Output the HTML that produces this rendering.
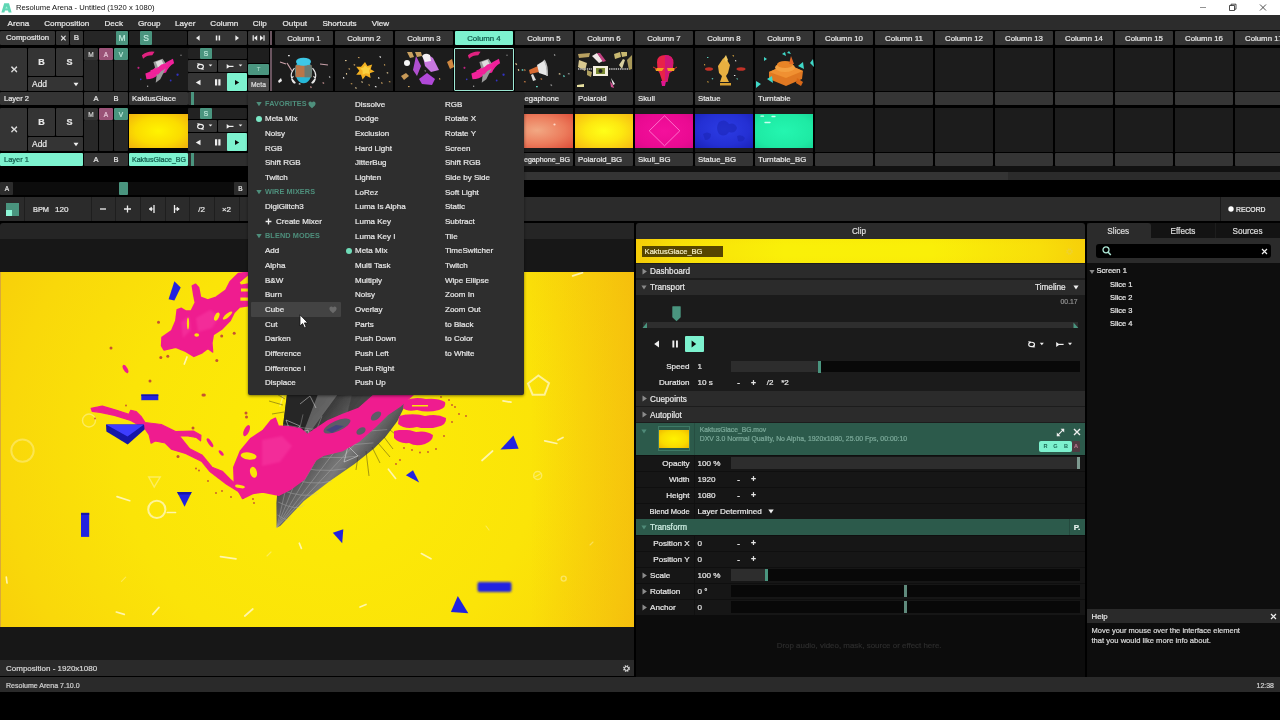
<!DOCTYPE html>
<html><head><meta charset="utf-8"><title>Resolume Arena</title>
<style>
html,body{margin:0;padding:0;background:#000;}
body{width:1280px;height:720px;position:relative;overflow:hidden;font-family:"Liberation Sans",sans-serif;font-size:8px;color:#e6e6e6;}
div,span,svg{position:absolute;box-sizing:border-box;}
span{white-space:pre;-webkit-text-stroke:0.22px currentColor;}
#w{left:0;top:0;width:1280px;height:720px;will-change:transform;}
</style></head><body><div id="w">
<div style="left:0px;top:0px;width:1280px;height:15px;background:#ffffff;"></div>
<svg style="left:1.4px;top:2.5px;" width="11" height="10" viewBox="0 0 11 10"><path d="M3.2 0.3 L8 0.3 L10.6 9.6 L7.6 9.6 L7 7.4 L4 7.4 L3.4 9.6 L0.4 9.6 Z" fill="#5fd6b4"/><path d="M4.3 5.6 L6.7 5.6 L5.5 3.2 Z" fill="#a8f0dc"/></svg>
<span style="left:16px;top:3px;font-size:7.65px;line-height:9.56px;color:#111;-webkit-text-stroke:0;">Resolume Arena - Untitled (1920 x 1080)</span>
<svg style="left:1196px;top:0px;" width="84" height="15" viewBox="0 0 84 15"><path d="M4 7.5h6" stroke="#777" stroke-width="0.8"/><path d="M33.5 5.5h5v5h-5z M35 5.5v-1.3h5v5h-1.5" fill="none" stroke="#222" stroke-width="0.8"/><path d="M64 4.5l6 6M70 4.5l-6 6" stroke="#222" stroke-width="0.8"/></svg>
<div style="left:0px;top:15px;width:1280px;height:15px;background:#2c2c2c;"></div>
<span style="left:7.59px;top:19px;font-size:8.1px;line-height:10.12px;color:#e8e8e8;">Arena</span>
<span style="left:44.24px;top:19px;font-size:8.1px;line-height:10.12px;color:#e8e8e8;">Composition</span>
<span style="left:104.52px;top:19px;font-size:8.1px;line-height:10.12px;color:#e8e8e8;">Deck</span>
<span style="left:137.99px;top:19px;font-size:8.1px;line-height:10.12px;color:#e8e8e8;">Group</span>
<span style="left:175.12px;top:19px;font-size:8.1px;line-height:10.12px;color:#e8e8e8;">Layer</span>
<span style="left:210.3px;top:19px;font-size:8.1px;line-height:10.12px;color:#e8e8e8;">Column</span>
<span style="left:252.77px;top:19px;font-size:8.1px;line-height:10.12px;color:#e8e8e8;">Clip</span>
<span style="left:282.59px;top:19px;font-size:8.1px;line-height:10.12px;color:#e8e8e8;">Output</span>
<span style="left:322.39px;top:19px;font-size:8.1px;line-height:10.12px;color:#e8e8e8;">Shortcuts</span>
<span style="left:371.8px;top:19px;font-size:8.1px;line-height:10.12px;color:#e8e8e8;">View</span>
<div style="left:0px;top:31px;width:55px;height:14px;background:#343434;border-radius:1px;"></div>
<span style="left:6px;top:33px;font-size:7.75px;line-height:9.69px;color:#e6e6e6;">Composition</span>
<div style="left:56px;top:31px;width:13px;height:14px;background:#343434;border-radius:1px;"></div>
<span style="left:59.69px;top:34px;font-size:7.5px;line-height:9.38px;color:#e6e6e6;">✕</span>
<div style="left:70px;top:31px;width:13px;height:14px;background:#343434;border-radius:1px;"></div>
<span style="left:73.83px;top:33px;font-size:8.0px;line-height:10.0px;color:#e6e6e6;">B</span>
<div style="left:84px;top:31px;width:44px;height:14px;background:#262626;border-radius:1px;"></div>
<div style="left:116px;top:31px;width:12px;height:14px;background:#4a957f;border-radius:1px;"></div>
<span style="left:118.46px;top:33px;font-size:8.5px;line-height:10.62px;color:#bfe9dc;">M</span>
<div style="left:129px;top:31px;width:58px;height:14px;background:#212121;border-radius:1px;"></div>
<div style="left:140px;top:31px;width:12px;height:14px;background:#4a957f;border-radius:1px;"></div>
<span style="left:143.17px;top:33px;font-size:8.5px;line-height:10.62px;color:#bfe9dc;">S</span>
<div style="left:188px;top:31px;width:59px;height:14px;background:#343434;border-radius:1px;"></div>
<svg style="left:188px;top:33px;" width="60" height="10" viewBox="0 0 60 10"><path d="M8 5 l3.6 -2.7 v5.4z" fill="#eee"/><path d="M27.8 2.4h1.5v5.2h-1.5z M30.6 2.4h1.5v5.2h-1.5z" fill="#eee"/><path d="M51 5 l-3.6 -2.7 v5.4z" fill="#eee"/></svg>
<div style="left:248px;top:31px;width:21px;height:14px;background:#343434;border-radius:1px;"></div>
<svg style="left:248px;top:33px;" width="21" height="10" viewBox="0 0 21 10"><path d="M4.6 2.2h1.2v5.6h-1.2z M9.2 2.2v5.6l-3.2 -2.8z M16.6 2.2h-1.2v5.6h1.2z M12 2.2v5.6l3.2 -2.8z" fill="#eee"/></svg>
<div style="left:270.4px;top:31px;width:1.7px;height:14px;background:#6b5560;"></div>
<div style="left:270.4px;top:48px;width:1.7px;height:43px;background:#6b5560;"></div>
<div style="left:274.67px;top:31px;width:58.67px;height:14px;background:#343434;border-radius:1px;"></div>
<span style="left:287.17px;top:34px;font-size:7.85px;line-height:9.81px;color:#e6e6e6;">Column 1</span>
<div style="left:334.67px;top:31px;width:58.67px;height:14px;background:#343434;border-radius:1px;"></div>
<span style="left:347.17px;top:34px;font-size:7.85px;line-height:9.81px;color:#e6e6e6;">Column 2</span>
<div style="left:394.67px;top:31px;width:58.67px;height:14px;background:#343434;border-radius:1px;"></div>
<span style="left:407.17px;top:34px;font-size:7.85px;line-height:9.81px;color:#e6e6e6;">Column 3</span>
<div style="left:454.67px;top:31px;width:58.67px;height:14px;background:#7df2cf;border-radius:1px;"></div>
<span style="left:467.17px;top:34px;font-size:7.85px;line-height:9.81px;color:#10584a;">Column 4</span>
<div style="left:514.67px;top:31px;width:58.67px;height:14px;background:#343434;border-radius:1px;"></div>
<span style="left:527.17px;top:34px;font-size:7.85px;line-height:9.81px;color:#e6e6e6;">Column 5</span>
<div style="left:574.67px;top:31px;width:58.67px;height:14px;background:#343434;border-radius:1px;"></div>
<span style="left:587.17px;top:34px;font-size:7.85px;line-height:9.81px;color:#e6e6e6;">Column 6</span>
<div style="left:634.67px;top:31px;width:58.67px;height:14px;background:#343434;border-radius:1px;"></div>
<span style="left:647.17px;top:34px;font-size:7.85px;line-height:9.81px;color:#e6e6e6;">Column 7</span>
<div style="left:694.67px;top:31px;width:58.67px;height:14px;background:#343434;border-radius:1px;"></div>
<span style="left:707.17px;top:34px;font-size:7.85px;line-height:9.81px;color:#e6e6e6;">Column 8</span>
<div style="left:754.67px;top:31px;width:58.67px;height:14px;background:#343434;border-radius:1px;"></div>
<span style="left:767.17px;top:34px;font-size:7.85px;line-height:9.81px;color:#e6e6e6;">Column 9</span>
<div style="left:814.67px;top:31px;width:58.67px;height:14px;background:#343434;border-radius:1px;"></div>
<span style="left:824.99px;top:34px;font-size:7.85px;line-height:9.81px;color:#e6e6e6;">Column 10</span>
<div style="left:874.67px;top:31px;width:58.67px;height:14px;background:#343434;border-radius:1px;"></div>
<span style="left:884.92px;top:34px;font-size:8.0px;line-height:10.0px;color:#e6e6e6;">Column 11</span>
<div style="left:934.67px;top:31px;width:58.67px;height:14px;background:#343434;border-radius:1px;"></div>
<span style="left:944.99px;top:34px;font-size:7.85px;line-height:9.81px;color:#e6e6e6;">Column 12</span>
<div style="left:994.67px;top:31px;width:58.67px;height:14px;background:#343434;border-radius:1px;"></div>
<span style="left:1004.99px;top:34px;font-size:7.85px;line-height:9.81px;color:#e6e6e6;">Column 13</span>
<div style="left:1054.67px;top:31px;width:58.67px;height:14px;background:#343434;border-radius:1px;"></div>
<span style="left:1064.99px;top:34px;font-size:7.85px;line-height:9.81px;color:#e6e6e6;">Column 14</span>
<div style="left:1114.67px;top:31px;width:58.67px;height:14px;background:#343434;border-radius:1px;"></div>
<span style="left:1124.99px;top:34px;font-size:7.85px;line-height:9.81px;color:#e6e6e6;">Column 15</span>
<div style="left:1174.67px;top:31px;width:58.67px;height:14px;background:#343434;border-radius:1px;"></div>
<span style="left:1184.99px;top:34px;font-size:7.85px;line-height:9.81px;color:#e6e6e6;">Column 16</span>
<div style="left:1234.67px;top:31px;width:58.67px;height:14px;background:#343434;border-radius:1px;"></div>
<span style="left:1244.99px;top:34px;font-size:7.85px;line-height:9.81px;color:#e6e6e6;">Column 17</span>
<div style="left:0px;top:48px;width:27px;height:43px;background:#343434;border-radius:1px;"></div>
<span style="left:9.94px;top:64px;font-size:9.5px;line-height:11.88px;color:#e6e6e6;">✕</span>
<div style="left:28px;top:48px;width:27px;height:28px;background:#343434;border-radius:1px;"></div>
<span style="left:38.25px;top:57px;font-size:9.0px;line-height:11.25px;color:#e6e6e6;font-weight:bold;">B</span>
<div style="left:56px;top:48px;width:27px;height:28px;background:#343434;border-radius:1px;"></div>
<span style="left:66.5px;top:57px;font-size:9.0px;line-height:11.25px;color:#e6e6e6;font-weight:bold;">S</span>
<div style="left:28px;top:77px;width:55px;height:14px;background:#343434;border-radius:1px;"></div>
<span style="left:32px;top:79px;font-size:8.45px;line-height:10.56px;color:#e6e6e6;">Add</span>
<svg style="left:73px;top:82px;" width="6" height="5" viewBox="0 0 6 5"><path d="M0.5 0.8h5l-2.5 3.4z" fill="#eee"/></svg>
<div style="left:84px;top:48px;width:14px;height:12px;background:#343434;border-radius:1px;"></div>
<span style="left:88.29px;top:51px;font-size:6.5px;line-height:8.12px;color:#cfcfcf;">M</span>
<div style="left:99px;top:48px;width:14px;height:12px;background:#9a5277;border-radius:1px;"></div>
<span style="left:103.83px;top:51px;font-size:6.5px;line-height:8.12px;color:#e6c3d6;">A</span>
<div style="left:114px;top:48px;width:14px;height:12px;background:#4a957f;border-radius:1px;"></div>
<span style="left:118.83px;top:51px;font-size:6.5px;line-height:8.12px;color:#bfe9dc;">V</span>
<div style="left:84px;top:60px;width:14px;height:31px;background:#282828;border-radius:1px;"></div>
<div style="left:99px;top:60px;width:14px;height:31px;background:#282828;border-radius:1px;"></div>
<div style="left:114px;top:60px;width:14px;height:31px;background:#282828;border-radius:1px;"></div>
<div style="left:129px;top:48px;width:59px;height:43px;background:#1b1b1b;"></div>
<div style="left:188px;top:48px;width:59px;height:11px;background:#222222;border-radius:1px;"></div>
<div style="left:200px;top:48px;width:12px;height:11px;background:#4a957f;border-radius:1px;"></div>
<span style="left:203.83px;top:50px;font-size:6.5px;line-height:8.12px;color:#bfe9dc;">S</span>
<div style="left:188px;top:60px;width:29px;height:12px;background:#343434;border-radius:1px;"></div>
<div style="left:218px;top:60px;width:29px;height:12px;background:#343434;border-radius:1px;"></div>
<svg style="left:188px;top:60px;" width="60" height="12" viewBox="0 0 60 12"><ellipse cx="12.5" cy="6.5" rx="2.9" ry="2.2" fill="none" stroke="#eee" stroke-width="1.15"/><path d="M8.800 3.600l2.900 -0.300 -0.900 2.500z M16.200 9.400l-2.900 0.300 0.900 -2.500z" fill="#eee"/><path d="M20.7 4.5h3.6l-1.8 2.1z" fill="#eee"/><path d="M38.7 4l3.2 2.4 -3.2 2.4z" fill="#eee"/><path d="M41 6.4h4.5" stroke="#eee" stroke-width="1.2"/><path d="M50.7 4.5h3.6l-1.8 2.100z" fill="#eee"/></svg>
<div style="left:188px;top:73px;width:59px;height:18px;background:#343434;border-radius:1px;"></div>
<div style="left:227px;top:73px;width:20px;height:18px;background:#7df2cf;border-radius:1px;"></div>
<svg style="left:188px;top:77px;" width="60" height="10" viewBox="0 0 60 10"><path d="M7.75 5.5 l4.75 -2.75 v5.5z" fill="#eee"/><path d="M27 2.300h2.200v6.200h-2.200z M30.300 2.300h2.200v6.200h-2.200z" fill="#eee"/><path d="M51.200 5.500 l-4.200 -2.600 v5.200z" fill="#0b0b0b"/></svg>
<div style="left:248px;top:48px;width:21px;height:15px;background:#1e1e1e;"></div>
<div style="left:248px;top:63.5px;width:21px;height:11.8px;background:#4a957f;border-radius:1px;"></div>
<span style="left:256.67px;top:66px;font-size:6.0px;line-height:7.5px;color:#b5e0d2;-webkit-text-stroke:0;">T</span>
<div style="left:248px;top:78px;width:21px;height:13px;background:#4a4a4a;border-radius:1px;"></div>
<span style="left:251.05px;top:81px;font-size:6.7px;line-height:8.38px;color:#ddd;">Meta</span>
<div style="left:0px;top:92px;width:83px;height:13px;background:#343434;border-radius:1px;"></div>
<span style="left:4px;top:94px;font-size:7.5px;line-height:9.38px;color:#e6e6e6;">Layer 2</span>
<div style="left:84px;top:92px;width:44px;height:13px;background:#343434;border-radius:1px;"></div>
<span style="left:93.5px;top:94px;font-size:7.5px;line-height:9.38px;color:#e6e6e6;">A</span>
<span style="left:113.5px;top:94px;font-size:7.5px;line-height:9.38px;color:#e6e6e6;">B</span>
<div style="left:129px;top:92px;width:59px;height:13px;background:#343434;border-radius:1px;"></div>
<span style="left:132px;top:94px;font-size:7.75px;line-height:9.69px;color:#e6e6e6;">KaktusGlace</span>
<div style="left:188px;top:92px;width:82px;height:13px;background:#2e2e2e;border-radius:1px;"></div>
<div style="left:191px;top:92px;width:3px;height:13px;background:#4a957f;"></div>
<div style="left:0px;top:108px;width:27px;height:43px;background:#343434;border-radius:1px;"></div>
<span style="left:9.94px;top:124px;font-size:9.5px;line-height:11.88px;color:#e6e6e6;">✕</span>
<div style="left:28px;top:108px;width:27px;height:28px;background:#343434;border-radius:1px;"></div>
<span style="left:38.25px;top:117px;font-size:9.0px;line-height:11.25px;color:#e6e6e6;font-weight:bold;">B</span>
<div style="left:56px;top:108px;width:27px;height:28px;background:#343434;border-radius:1px;"></div>
<span style="left:66.5px;top:117px;font-size:9.0px;line-height:11.25px;color:#e6e6e6;font-weight:bold;">S</span>
<div style="left:28px;top:137px;width:55px;height:14px;background:#343434;border-radius:1px;"></div>
<span style="left:32px;top:139px;font-size:8.45px;line-height:10.56px;color:#e6e6e6;">Add</span>
<svg style="left:73px;top:142px;" width="6" height="5" viewBox="0 0 6 5"><path d="M0.5 0.8h5l-2.5 3.4z" fill="#eee"/></svg>
<div style="left:84px;top:108px;width:14px;height:12px;background:#343434;border-radius:1px;"></div>
<span style="left:88.29px;top:111px;font-size:6.5px;line-height:8.12px;color:#cfcfcf;">M</span>
<div style="left:99px;top:108px;width:14px;height:12px;background:#9a5277;border-radius:1px;"></div>
<span style="left:103.83px;top:111px;font-size:6.5px;line-height:8.12px;color:#e6c3d6;">A</span>
<div style="left:114px;top:108px;width:14px;height:12px;background:#4a957f;border-radius:1px;"></div>
<span style="left:118.83px;top:111px;font-size:6.5px;line-height:8.12px;color:#bfe9dc;">V</span>
<div style="left:84px;top:120px;width:14px;height:31px;background:#282828;border-radius:1px;"></div>
<div style="left:99px;top:120px;width:14px;height:31px;background:#282828;border-radius:1px;"></div>
<div style="left:114px;top:120px;width:14px;height:31px;background:#282828;border-radius:1px;"></div>
<div style="left:129px;top:108px;width:59px;height:43px;background:#1b1b1b;"></div>
<div style="left:188px;top:108px;width:59px;height:11px;background:#222222;border-radius:1px;"></div>
<div style="left:200px;top:108px;width:12px;height:11px;background:#4a957f;border-radius:1px;"></div>
<span style="left:203.83px;top:110px;font-size:6.5px;line-height:8.12px;color:#bfe9dc;">S</span>
<div style="left:188px;top:120px;width:29px;height:12px;background:#343434;border-radius:1px;"></div>
<div style="left:218px;top:120px;width:29px;height:12px;background:#343434;border-radius:1px;"></div>
<svg style="left:188px;top:120px;" width="60" height="12" viewBox="0 0 60 12"><ellipse cx="12.5" cy="6.5" rx="2.9" ry="2.2" fill="none" stroke="#eee" stroke-width="1.15"/><path d="M8.800 3.600l2.900 -0.300 -0.900 2.500z M16.200 9.400l-2.900 0.300 0.900 -2.500z" fill="#eee"/><path d="M20.7 4.5h3.6l-1.8 2.1z" fill="#eee"/><path d="M38.7 4l3.2 2.4 -3.2 2.4z" fill="#eee"/><path d="M41 6.4h4.5" stroke="#eee" stroke-width="1.2"/><path d="M50.7 4.5h3.6l-1.8 2.100z" fill="#eee"/></svg>
<div style="left:188px;top:133px;width:59px;height:18px;background:#343434;border-radius:1px;"></div>
<div style="left:227px;top:133px;width:20px;height:18px;background:#7df2cf;border-radius:1px;"></div>
<svg style="left:188px;top:137px;" width="60" height="10" viewBox="0 0 60 10"><path d="M7.75 5.5 l4.75 -2.75 v5.5z" fill="#eee"/><path d="M27 2.300h2.200v6.200h-2.200z M30.300 2.300h2.200v6.200h-2.200z" fill="#eee"/><path d="M51.200 5.500 l-4.200 -2.600 v5.200z" fill="#0b0b0b"/></svg>
<div style="left:248px;top:108px;width:21px;height:15px;background:#1e1e1e;"></div>
<div style="left:248px;top:123.5px;width:21px;height:11.8px;background:#4a957f;border-radius:1px;"></div>
<span style="left:256.67px;top:126px;font-size:6.0px;line-height:7.5px;color:#b5e0d2;-webkit-text-stroke:0;">T</span>
<div style="left:248px;top:138px;width:21px;height:13px;background:#4a4a4a;border-radius:1px;"></div>
<span style="left:251.05px;top:141px;font-size:6.7px;line-height:8.38px;color:#ddd;">Meta</span>
<div style="left:0px;top:153px;width:83px;height:13px;background:#7df2cf;border-radius:1px;"></div>
<span style="left:4px;top:155px;font-size:7.5px;line-height:9.38px;color:#115a4b;">Layer 1</span>
<div style="left:84px;top:153px;width:44px;height:13px;background:#343434;border-radius:1px;"></div>
<span style="left:93.5px;top:155px;font-size:7.5px;line-height:9.38px;color:#e6e6e6;">A</span>
<span style="left:113.5px;top:155px;font-size:7.5px;line-height:9.38px;color:#e6e6e6;">B</span>
<div style="left:129px;top:153px;width:59px;height:13px;background:#7df2cf;border-radius:1px;"></div>
<span style="left:132px;top:156px;font-size:7.05px;line-height:8.81px;color:#115a4b;">KaktusGlace_BG</span>
<div style="left:188px;top:153px;width:82px;height:13px;background:#2e2e2e;border-radius:1px;"></div>
<div style="left:191px;top:153px;width:3px;height:13px;background:#4a957f;"></div>
<div style="left:270.4px;top:108px;width:1.7px;height:44px;background:#6b5560;"></div>
<div style="left:272px;top:48px;width:61.34px;height:43px;background:#1c1c1c;"></div>
<div style="left:274.67px;top:92px;width:58.67px;height:13px;background:#353535;border-radius:1px;"></div>
<div style="left:274.67px;top:108px;width:58.67px;height:44px;background:#1c1c1c;"></div>
<div style="left:274.67px;top:153px;width:58.67px;height:13px;background:#353535;border-radius:1px;"></div>
<span style="left:277.97px;top:94px;font-size:7.8px;line-height:9.75px;color:#e6e6e6;">Bandit</span>
<span style="left:277.97px;top:155px;font-size:7.8px;line-height:9.75px;color:#e6e6e6;">Bandit_BG</span>
<div style="left:334.67px;top:48px;width:58.67px;height:43px;background:#1c1c1c;"></div>
<div style="left:334.67px;top:92px;width:58.67px;height:13px;background:#353535;border-radius:1px;"></div>
<div style="left:334.67px;top:108px;width:58.67px;height:44px;background:#1c1c1c;"></div>
<div style="left:334.67px;top:153px;width:58.67px;height:13px;background:#353535;border-radius:1px;"></div>
<span style="left:337.97px;top:94px;font-size:7.8px;line-height:9.75px;color:#e6e6e6;">Confetti</span>
<span style="left:337.97px;top:155px;font-size:7.8px;line-height:9.75px;color:#e6e6e6;">Confetti_BG</span>
<div style="left:394.67px;top:48px;width:58.67px;height:43px;background:#1c1c1c;"></div>
<div style="left:394.67px;top:92px;width:58.67px;height:13px;background:#353535;border-radius:1px;"></div>
<div style="left:394.67px;top:108px;width:58.67px;height:44px;background:#1c1c1c;"></div>
<div style="left:394.67px;top:153px;width:58.67px;height:13px;background:#353535;border-radius:1px;"></div>
<span style="left:397.97px;top:94px;font-size:7.8px;line-height:9.75px;color:#e6e6e6;">Crystal</span>
<span style="left:397.97px;top:155px;font-size:7.8px;line-height:9.75px;color:#e6e6e6;">Crystal_BG</span>
<div style="left:454.67px;top:48px;width:58.67px;height:43px;background:#1c1c1c;"></div>
<div style="left:454.67px;top:92px;width:58.67px;height:13px;background:#353535;border-radius:1px;"></div>
<div style="left:454.67px;top:108px;width:58.67px;height:44px;background:#1c1c1c;"></div>
<div style="left:454.67px;top:153px;width:58.67px;height:13px;background:#353535;border-radius:1px;"></div>
<span style="left:457.97px;top:94px;font-size:7.8px;line-height:9.75px;color:#e6e6e6;">KaktusGlace</span>
<span style="left:457.97px;top:155px;font-size:7.8px;line-height:9.75px;color:#e6e6e6;">KaktusGlace_BG</span>
<div style="left:514.67px;top:48px;width:58.67px;height:43px;background:#1c1c1c;"></div>
<div style="left:514.67px;top:92px;width:58.67px;height:13px;background:#353535;border-radius:1px;"></div>
<div style="left:514.67px;top:108px;width:58.67px;height:44px;background:#1c1c1c;"></div>
<div style="left:514.67px;top:153px;width:58.67px;height:13px;background:#353535;border-radius:1px;"></div>
<span style="left:517.97px;top:94px;font-size:7.8px;line-height:9.75px;color:#e6e6e6;">Megaphone</span>
<span style="left:517.97px;top:156px;font-size:7.15px;line-height:8.94px;color:#e6e6e6;">Megaphone_BG</span>
<div style="left:574.67px;top:48px;width:58.67px;height:43px;background:#1c1c1c;"></div>
<div style="left:574.67px;top:92px;width:58.67px;height:13px;background:#353535;border-radius:1px;"></div>
<div style="left:574.67px;top:108px;width:58.67px;height:44px;background:#1c1c1c;"></div>
<div style="left:574.67px;top:153px;width:58.67px;height:13px;background:#353535;border-radius:1px;"></div>
<span style="left:577.97px;top:94px;font-size:7.8px;line-height:9.75px;color:#e6e6e6;">Polaroid</span>
<span style="left:577.97px;top:155px;font-size:7.8px;line-height:9.75px;color:#e6e6e6;">Polaroid_BG</span>
<div style="left:634.67px;top:48px;width:58.67px;height:43px;background:#1c1c1c;"></div>
<div style="left:634.67px;top:92px;width:58.67px;height:13px;background:#353535;border-radius:1px;"></div>
<div style="left:634.67px;top:108px;width:58.67px;height:44px;background:#1c1c1c;"></div>
<div style="left:634.67px;top:153px;width:58.67px;height:13px;background:#353535;border-radius:1px;"></div>
<span style="left:637.97px;top:94px;font-size:7.8px;line-height:9.75px;color:#e6e6e6;">Skull</span>
<span style="left:637.97px;top:155px;font-size:7.8px;line-height:9.75px;color:#e6e6e6;">Skull_BG</span>
<div style="left:694.67px;top:48px;width:58.67px;height:43px;background:#1c1c1c;"></div>
<div style="left:694.67px;top:92px;width:58.67px;height:13px;background:#353535;border-radius:1px;"></div>
<div style="left:694.67px;top:108px;width:58.67px;height:44px;background:#1c1c1c;"></div>
<div style="left:694.67px;top:153px;width:58.67px;height:13px;background:#353535;border-radius:1px;"></div>
<span style="left:697.97px;top:94px;font-size:7.8px;line-height:9.75px;color:#e6e6e6;">Statue</span>
<span style="left:697.97px;top:155px;font-size:7.8px;line-height:9.75px;color:#e6e6e6;">Statue_BG</span>
<div style="left:754.67px;top:48px;width:58.67px;height:43px;background:#1c1c1c;"></div>
<div style="left:754.67px;top:92px;width:58.67px;height:13px;background:#353535;border-radius:1px;"></div>
<div style="left:754.67px;top:108px;width:58.67px;height:44px;background:#1c1c1c;"></div>
<div style="left:754.67px;top:153px;width:58.67px;height:13px;background:#353535;border-radius:1px;"></div>
<span style="left:757.97px;top:94px;font-size:7.8px;line-height:9.75px;color:#e6e6e6;">Turntable</span>
<span style="left:757.97px;top:155px;font-size:7.8px;line-height:9.75px;color:#e6e6e6;">Turntable_BG</span>
<div style="left:814.67px;top:48px;width:58.67px;height:43px;background:#1c1c1c;"></div>
<div style="left:814.67px;top:92px;width:58.67px;height:13px;background:#353535;border-radius:1px;"></div>
<div style="left:814.67px;top:108px;width:58.67px;height:44px;background:#1c1c1c;"></div>
<div style="left:814.67px;top:153px;width:58.67px;height:13px;background:#353535;border-radius:1px;"></div>
<div style="left:874.67px;top:48px;width:58.67px;height:43px;background:#1c1c1c;"></div>
<div style="left:874.67px;top:92px;width:58.67px;height:13px;background:#353535;border-radius:1px;"></div>
<div style="left:874.67px;top:108px;width:58.67px;height:44px;background:#1c1c1c;"></div>
<div style="left:874.67px;top:153px;width:58.67px;height:13px;background:#353535;border-radius:1px;"></div>
<div style="left:934.67px;top:48px;width:58.67px;height:43px;background:#1c1c1c;"></div>
<div style="left:934.67px;top:92px;width:58.67px;height:13px;background:#353535;border-radius:1px;"></div>
<div style="left:934.67px;top:108px;width:58.67px;height:44px;background:#1c1c1c;"></div>
<div style="left:934.67px;top:153px;width:58.67px;height:13px;background:#353535;border-radius:1px;"></div>
<div style="left:994.67px;top:48px;width:58.67px;height:43px;background:#1c1c1c;"></div>
<div style="left:994.67px;top:92px;width:58.67px;height:13px;background:#353535;border-radius:1px;"></div>
<div style="left:994.67px;top:108px;width:58.67px;height:44px;background:#1c1c1c;"></div>
<div style="left:994.67px;top:153px;width:58.67px;height:13px;background:#353535;border-radius:1px;"></div>
<div style="left:1054.67px;top:48px;width:58.67px;height:43px;background:#1c1c1c;"></div>
<div style="left:1054.67px;top:92px;width:58.67px;height:13px;background:#353535;border-radius:1px;"></div>
<div style="left:1054.67px;top:108px;width:58.67px;height:44px;background:#1c1c1c;"></div>
<div style="left:1054.67px;top:153px;width:58.67px;height:13px;background:#353535;border-radius:1px;"></div>
<div style="left:1114.67px;top:48px;width:58.67px;height:43px;background:#1c1c1c;"></div>
<div style="left:1114.67px;top:92px;width:58.67px;height:13px;background:#353535;border-radius:1px;"></div>
<div style="left:1114.67px;top:108px;width:58.67px;height:44px;background:#1c1c1c;"></div>
<div style="left:1114.67px;top:153px;width:58.67px;height:13px;background:#353535;border-radius:1px;"></div>
<div style="left:1174.67px;top:48px;width:58.67px;height:43px;background:#1c1c1c;"></div>
<div style="left:1174.67px;top:92px;width:58.67px;height:13px;background:#353535;border-radius:1px;"></div>
<div style="left:1174.67px;top:108px;width:58.67px;height:44px;background:#1c1c1c;"></div>
<div style="left:1174.67px;top:153px;width:58.67px;height:13px;background:#353535;border-radius:1px;"></div>
<div style="left:1234.67px;top:48px;width:58.67px;height:43px;background:#1c1c1c;"></div>
<div style="left:1234.67px;top:92px;width:58.67px;height:13px;background:#353535;border-radius:1px;"></div>
<div style="left:1234.67px;top:108px;width:58.67px;height:44px;background:#1c1c1c;"></div>
<div style="left:1234.67px;top:153px;width:58.67px;height:13px;background:#353535;border-radius:1px;"></div>
<div style="left:454.4px;top:47.8px;width:59.2px;height:43.4px;background:transparent;border-radius:1px;border:1.5px solid #9eead6;"></div>
<svg style="left:274.67px;top:48px;" width="59" height="43" viewBox="0 0 59 43"><defs><filter id="tb27448"><feGaussianBlur stdDeviation="0.6"/></filter></defs><g filter="url(#tb27448)"><g transform="translate(-1.5 -1.8)"><ellipse cx="30" cy="25" rx="8.5" ry="12" fill="#28b8d8"/><rect x="22" y="19" width="16" height="12" fill="#b9764a"/><rect x="31" y="19" width="7" height="12" fill="#6b7a72"/><ellipse cx="30" cy="15.5" rx="7.5" ry="4" fill="#3cc8e6"/><path d="M21 22q-7 8 1 15M39 22q7 8-1 15M20 30q-4 3 1 7M40 30q4 3-1 7" stroke="#e8e8e8" stroke-width="1.1" fill="none"/></g><path d="M5 14l6 2M45 16l8 1M12 15l5 8" stroke="#c9a0a8" stroke-width="1.2"/><path d="M3 33l3-3 1 3-3 2z" fill="#eee"/><rect x="13" y="7" width="1.8" height="1.26" fill="#ddd" transform="rotate(0 13 7)"/><rect x="48" y="34" width="1.8" height="1.26" fill="#b88" transform="rotate(37 48 34)"/><rect x="55" y="28" width="1.8" height="1.26" fill="#999" transform="rotate(74 55 28)"/><rect x="24" y="35" width="1.8" height="1.26" fill="#ddd" transform="rotate(21 24 35)"/><rect x="36" y="38" width="1.8" height="1.26" fill="#b88" transform="rotate(58 36 38)"/></g></svg>
<svg style="left:334.67px;top:48px;" width="59" height="43" viewBox="0 0 59 43"><defs><filter id="tb33448"><feGaussianBlur stdDeviation="0.6"/></filter></defs><g filter="url(#tb33448)"><g transform="translate(30 22) scale(0.8) translate(-30 -24)"><path d="M30 14l3 5 6-2-2 6 5 3-6 2 1 6-6-3-4 5-2-6-6 0 4-5-4-5 6 0z" fill="#f2b020"/><path d="M30 18l3 3 4 0-2 4 1 4-5-1-4 2 0-5-3-3 4-1z" fill="#f9d040"/></g><rect x="10" y="12" width="1.6" height="1.1199999999999999" fill="#d8c090" transform="rotate(0 10 12)"/><rect x="14" y="20" width="1.6" height="1.1199999999999999" fill="#caa060" transform="rotate(37 14 20)"/><rect x="9" y="29" width="1.6" height="1.1199999999999999" fill="#eee" transform="rotate(74 9 29)"/><rect x="16" y="35" width="1.6" height="1.1199999999999999" fill="#b89050" transform="rotate(21 16 35)"/><rect x="21" y="39" width="1.6" height="1.1199999999999999" fill="#d8c090" transform="rotate(58 21 39)"/><rect x="23" y="9" width="1.6" height="1.1199999999999999" fill="#caa060" transform="rotate(5 23 9)"/><rect x="45" y="8" width="1.6" height="1.1199999999999999" fill="#eee" transform="rotate(42 45 8)"/><rect x="50" y="16" width="1.6" height="1.1199999999999999" fill="#b89050" transform="rotate(79 50 16)"/><rect x="52" y="24" width="1.6" height="1.1199999999999999" fill="#d8c090" transform="rotate(26 52 24)"/><rect x="47" y="34" width="1.6" height="1.1199999999999999" fill="#caa060" transform="rotate(63 47 34)"/><rect x="40" y="38" width="1.6" height="1.1199999999999999" fill="#eee" transform="rotate(10 40 38)"/><rect x="34" y="36" width="1.6" height="1.1199999999999999" fill="#b89050" transform="rotate(47 34 36)"/><rect x="12" y="25" width="1.6" height="1.1199999999999999" fill="#d8c090" transform="rotate(84 12 25)"/><rect x="19" y="16" width="1.6" height="1.1199999999999999" fill="#caa060" transform="rotate(31 19 16)"/><rect x="44" y="29" width="1.6" height="1.1199999999999999" fill="#eee" transform="rotate(68 44 29)"/><rect x="54" y="33" width="1.6" height="1.1199999999999999" fill="#b89050" transform="rotate(15 54 33)"/><rect x="27" y="33" width="1.6" height="1.1199999999999999" fill="#d8c090" transform="rotate(52 27 33)"/></g></svg>
<svg style="left:394.67px;top:48px;" width="59" height="43" viewBox="0 0 59 43"><defs><filter id="tb39448"><feGaussianBlur stdDeviation="0.6"/></filter></defs><g filter="url(#tb39448)"><path d="M21 8l5 10-4 10-4-6z" fill="#b050d0"/><path d="M28 9q6-3 10 1l6 12-8 2-6-6z" fill="#c878e0"/><path d="M27 8q3-4 8-1l1 6-6 1z" fill="#f4f0f4"/><path d="M24 31l8-6 8 6-3 6-10-1z" fill="#b048d8"/><circle cx="12" cy="15" r="3" fill="#f6f6f6"/><path d="M12 4l5 0 2 5-4 1zM20 4l6 0 1 4-5 1z" fill="#c8a060"/><path d="M6 28l5-3 3 3-5 4z" fill="#c89a58"/><path d="M52 14l5-3 2 8-4 2z" fill="#d08840"/><rect x="13" y="38" width="1.6" height="1.1199999999999999" fill="#c8a060" transform="rotate(0 13 38)"/><rect x="30" y="22" width="1.6" height="1.1199999999999999" fill="#888" transform="rotate(37 30 22)"/><rect x="45" y="30" width="1.6" height="1.1199999999999999" fill="#c8a060" transform="rotate(74 45 30)"/></g></svg>
<svg style="left:454.67px;top:48px;" width="59" height="43" viewBox="0 0 59 43"><defs><filter id="tb45448"><feGaussianBlur stdDeviation="0.6"/></filter></defs><g filter="url(#tb45448)"><g transform="translate(29 21) scale(1.15) translate(-29 -21)"><path d="M15 9q5-4 11-3l-2 3q-5 0-8 3z" fill="#e0207f"/><path d="M18 25q6-2 9-6l6-1q4-4 9-6l1 4q-5 3-7 8l-7 2q-4 4-10 4z" fill="#f0209a"/><path d="M25 15l8-3 4 6-6 12-4 3 1-8z" fill="#9a9a9a"/><path d="M27 15l5-2 2 4-5 3z" fill="#ddd"/><path d="M22 22q6-1 10-5l8-2-3 5q-5 2-8 6z" fill="#f0209a"/><circle cx="12" cy="20" r="0.9" fill="#c02080"/><circle cx="46" cy="26" r="1" fill="#3030c0"/><circle cx="40" cy="31" r="0.8" fill="#3030c0"/><circle cx="14" cy="30" r="0.7" fill="#3a3ad0"/><circle cx="49" cy="9" r="0.6" fill="#888"/><circle cx="20" cy="36" r="0.6" fill="#aaa"/></g></g></svg>
<svg style="left:514.67px;top:48px;" width="59" height="43" viewBox="0 0 59 43"><defs><filter id="tb51448"><feGaussianBlur stdDeviation="0.6"/></filter></defs><g filter="url(#tb51448)"><path d="M14 22l9-4 1 6-9 2z" fill="#d86a30"/><path d="M22 17l8-5 3 16-9-3z" fill="#e8e8e8"/><path d="M29 12q4 6 3 16" stroke="#bbb" stroke-width="1.4" fill="none"/><path d="M18 26l3 6-3 1-2-6z" fill="#ddd"/><rect x="21" y="38" width="1.8" height="1.26" fill="#60d0c0" transform="rotate(0 21 38)"/><rect x="26" y="30" width="1.8" height="1.26" fill="#b07040" transform="rotate(37 26 30)"/><rect x="40" y="6" width="1.8" height="1.26" fill="#888" transform="rotate(74 40 6)"/><rect x="44" y="25" width="1.8" height="1.26" fill="#d8c090" transform="rotate(21 44 25)"/><rect x="49" y="27" width="1.8" height="1.26" fill="#60d0c0" transform="rotate(58 49 27)"/><rect x="9" y="33" width="1.8" height="1.26" fill="#b07040" transform="rotate(5 9 33)"/><rect x="36" y="36" width="1.8" height="1.26" fill="#888" transform="rotate(42 36 36)"/><rect x="4" y="21" width="1.8" height="1.26" fill="#d8c090" transform="rotate(79 4 21)"/><rect x="7" y="21" width="1.8" height="1.26" fill="#60d0c0" transform="rotate(26 7 21)"/><rect x="10" y="21" width="1.8" height="1.26" fill="#b07040" transform="rotate(63 10 21)"/><rect x="53" y="25" width="1.8" height="1.26" fill="#888" transform="rotate(10 53 25)"/><rect x="1" y="15" width="1.8" height="1.26" fill="#d8c090" transform="rotate(47 1 15)"/></g></svg>
<svg style="left:574.67px;top:48px;" width="59" height="43" viewBox="0 0 59 43"><defs><filter id="tb57448"><feGaussianBlur stdDeviation="0.6"/></filter></defs><g filter="url(#tb57448)"><rect x="18" y="18" width="15" height="10" fill="#f4f0e0"/><rect x="21" y="20" width="9" height="6" fill="#7a8a30"/><circle cx="25.500" cy="23" r="2" fill="#222"/><path d="M4 12l8 3-2 8-7-4z" fill="#d8c890"/><path d="M3 6l12-1-1 4-10 1z" fill="#b8a060"/><path d="M17 8l5-3 6 8-4 2z" fill="#f0e8e8"/><path d="M22 5l3 0 6 8-3 1z" fill="#c04080"/><path d="M39 6l6-2 1 5-6 2zM46 4l6 0 0 4-5 1z" fill="#c8b870"/><path d="M52 12l5-5 0 14-3 1z" fill="#a89858"/><path d="M44 17l4-6 2 1-3 9z" fill="#d8d0a0"/><path d="M3 21h14M34 21h20" stroke="#999" stroke-width="2" stroke-dasharray="1.4 0.8"/><path d="M36 30l4 6-2 1z" fill="#eee"/><path d="M35 33l3 4 1 3-3-1z" fill="#d05090"/><path d="M2 37l7-1 0 3-7 0z" fill="#e8e0a0"/><path d="M12 22l5 2-1 5-4-2z" fill="#b0a060"/></g></svg>
<svg style="left:634.67px;top:48px;" width="59" height="43" viewBox="0 0 59 43"><defs><filter id="tb63448"><feGaussianBlur stdDeviation="0.6"/></filter></defs><g filter="url(#tb63448)"><path d="M22 14q0-7 8.500-7q8 0 8 8l-1 8-3 2-2 9-5 0-3-9-2-3z" fill="#e8204a"/><path d="M30 7q8 0 8 8l-1 8-3 2-2 9-2 0z" fill="#d01878"/><path d="M20 20l9 0-2 3-6 0zM32 20l8 0-1 3-6 0z" fill="#f4a020"/><path d="M26 33l5 0-1 5-3 0z" fill="#e01890"/><path d="M18 19l4 2M42 19l-3 2" stroke="#d03030" stroke-width="1"/></g></svg>
<svg style="left:694.67px;top:48px;" width="59" height="43" viewBox="0 0 59 43"><defs><filter id="tb69448"><feGaussianBlur stdDeviation="0.6"/></filter></defs><g filter="url(#tb69448)"><path d="M27 12q2-4 5 0l3 5-2 8-2 3 3 6-9 0 2-6-3-3-1-7z" fill="#e8b040"/><path d="M29 10l2-3 2 5-2 2z" fill="#f0c860"/><ellipse cx="14" cy="21" rx="4" ry="1.800" fill="#c03028"/><ellipse cx="46" cy="21" rx="4.500" ry="1.800" fill="#c03028"/><path d="M25 35h11v2.500h-11z" fill="#d8a030"/><rect x="12" y="9" width="1.4" height="0.9799999999999999" fill="#60d0c0" transform="rotate(0 12 9)"/><rect x="38" y="7" width="1.4" height="0.9799999999999999" fill="#e8b040" transform="rotate(37 38 7)"/><rect x="41" y="12" width="1.4" height="0.9799999999999999" fill="#eee" transform="rotate(74 41 12)"/><rect x="17" y="30" width="1.4" height="0.9799999999999999" fill="#60d0c0" transform="rotate(21 17 30)"/><rect x="13" y="33" width="1.4" height="0.9799999999999999" fill="#e8b040" transform="rotate(58 13 33)"/><rect x="39" y="27" width="1.4" height="0.9799999999999999" fill="#eee" transform="rotate(5 39 27)"/><rect x="42" y="30" width="1.4" height="0.9799999999999999" fill="#60d0c0" transform="rotate(42 42 30)"/><rect x="10" y="16" width="1.4" height="0.9799999999999999" fill="#e8b040" transform="rotate(79 10 16)"/></g></svg>
<svg style="left:754.67px;top:48px;" width="59" height="43" viewBox="0 0 59 43"><defs><filter id="tb75448"><feGaussianBlur stdDeviation="0.6"/></filter></defs><g filter="url(#tb75448)"><path d="M14 24l18-8 16 7-1 8-16 7-17-7z" fill="#e07820"/><path d="M14 24l18-8 16 7-17 7z" fill="#f09030"/><ellipse cx="30" cy="19.500" rx="10" ry="4.500" fill="#f4a040"/><ellipse cx="30" cy="16.500" rx="8" ry="3.500" fill="#e88428"/><path d="M36 8l3 8-5 0z" fill="#e06828"/><path d="M42 30l6 4-2 4-5-3z" fill="#d86818"/><path d="M1 33l5 3-5 4zM12 31l5-3 1 7zM43 18l5-4 1 7zM55 15l3-4 1 8zM9 9l3 2-3 2zM27 6l3-2 1 4zM32 5l2-2 2 3z" fill="#40d8c8"/></g></svg>
<svg style="left:129px;top:48px;" width="59" height="43" viewBox="0 0 59 43"><defs><filter id="tb12948"><feGaussianBlur stdDeviation="0.6"/></filter></defs><g filter="url(#tb12948)"><g transform="translate(29 21) scale(1.15) translate(-29 -21)"><path d="M15 9q5-4 11-3l-2 3q-5 0-8 3z" fill="#e0207f"/><path d="M18 25q6-2 9-6l6-1q4-4 9-6l1 4q-5 3-7 8l-7 2q-4 4-10 4z" fill="#f0209a"/><path d="M25 15l8-3 4 6-6 12-4 3 1-8z" fill="#9a9a9a"/><path d="M27 15l5-2 2 4-5 3z" fill="#ddd"/><path d="M22 22q6-1 10-5l8-2-3 5q-5 2-8 6z" fill="#f0209a"/><circle cx="12" cy="20" r="0.9" fill="#c02080"/><circle cx="46" cy="26" r="1" fill="#3030c0"/><circle cx="40" cy="31" r="0.8" fill="#3030c0"/><circle cx="14" cy="30" r="0.7" fill="#3a3ad0"/><circle cx="49" cy="9" r="0.6" fill="#888"/><circle cx="20" cy="36" r="0.6" fill="#aaa"/></g></g></svg>
<div style="left:274.67px;top:114px;width:58.67px;height:33.6px;background:#000;background:radial-gradient(ellipse at 45% 50%,#7ad8f0 0%,#30a8d8 100%);"></div>
<div style="left:334.67px;top:114px;width:58.67px;height:33.6px;background:#000;background:radial-gradient(ellipse at 50% 50%,#c0b0f0 0%,#7050c8 100%);"></div>
<div style="left:394.67px;top:114px;width:58.67px;height:33.6px;background:#000;background:radial-gradient(ellipse at 50% 50%,#f0d0a0 0%,#d09050 100%);"></div>
<div style="left:454.67px;top:114px;width:58.67px;height:33.6px;background:#000;background:radial-gradient(ellipse at 50% 50%,#fff400 0%,#fbdc00 55%,#f0b010 100%);"></div>
<div style="left:514.67px;top:114px;width:58.67px;height:33.6px;background:#000;background:radial-gradient(ellipse at 38% 48%,#f2a883 0%,#ec7c5c 55%,#de4c38 100%);"><svg style="left:0;top:0" width="59" height="34" viewBox="0 0 59 34"><circle cx="39.500" cy="10.500" r="1.100" fill="#ffd8c8"/><circle cx="5" cy="22" r="0.800" fill="#ffc8b0"/></svg></div>
<div style="left:574.67px;top:114px;width:58.67px;height:33.6px;background:#000;background:radial-gradient(ellipse at 50% 50%,#ffff18 0%,#fde810 45%,#f6b814 100%);"></div>
<div style="left:634.67px;top:114px;width:58.67px;height:33.6px;background:#000;background:radial-gradient(ellipse at 50% 50%,#f4109c 0%,#ea0a92 70%,#d80a88 100%);"><svg style="left:0;top:0" width="59" height="34" viewBox="0 0 59 34"><path d="M29.500 1.800L44.800 16.800 29.500 31.800 14.200 16.800Z" fill="none" stroke="#ff7ad0" stroke-width="0.9"/></svg></div>
<div style="left:694.67px;top:114px;width:58.67px;height:33.6px;background:#000;background:radial-gradient(ellipse at 50% 45%,#2c3ce4 0%,#2430d4 60%,#1a22b8 100%);"><svg style="left:0;top:0" width="59" height="34" viewBox="0 0 59 34"><g fill="#1a24b4" opacity="0.55"><path d="M24 8q6-4 10 2q6-2 8 4q-2 6-8 4q-4 6-10 2q-4-6 0-12z"/><path d="M8 20q4-3 8 0q0 6-6 6z"/><path d="M42 22q5-2 8 2q-2 5-7 3z"/></g></svg></div>
<div style="left:754.67px;top:114px;width:58.67px;height:33.6px;background:#000;background:radial-gradient(ellipse at 50% 50%,#24f6b0 0%,#1eeaa4 70%,#18d898 100%);"><svg style="left:0;top:0" width="59" height="34" viewBox="0 0 59 34"><path d="M10 8.500h5M17 2.500h3M6 2.200h2.500" stroke="#c8fff0" stroke-width="1.300" stroke-linecap="round"/></svg></div>
<div style="left:129px;top:108px;width:59px;height:45px;background:#040404;"></div>
<div style="left:129px;top:114px;width:59px;height:33.6px;background:#000;background:radial-gradient(ellipse at 50% 50%,#fff400 0%,#fbdc00 55%,#f0b010 100%);"></div>
<div style="left:248px;top:166px;width:1032px;height:6px;background:#111;"></div>
<div style="left:248px;top:172px;width:1032px;height:8px;background:#2b2b2b;"></div>
<div style="left:248px;top:172px;width:760px;height:8px;background:#343434;"></div>
<div style="left:0px;top:166px;width:247px;height:16px;background:#000;"></div>
<div style="left:0px;top:182px;width:247px;height:13px;background:#0c0c0c;"></div>
<div style="left:0px;top:182px;width:13px;height:13px;background:#2c2c2c;border-radius:1px;"></div>
<span style="left:4.63px;top:185px;font-size:6.5px;line-height:8.12px;color:#e6e6e6;">A</span>
<div style="left:234px;top:182px;width:13px;height:13px;background:#2c2c2c;border-radius:1px;"></div>
<span style="left:238.33px;top:185px;font-size:6.5px;line-height:8.12px;color:#e6e6e6;">B</span>
<div style="left:119px;top:182px;width:9px;height:13px;background:#4a957f;border-radius:1px;"></div>
<div style="left:0px;top:197px;width:1280px;height:24px;background:#2b2b2b;"></div>
<div style="left:6px;top:203px;width:13px;height:13px;background:#4a957f;"></div>
<div style="left:6px;top:210px;width:6px;height:6px;background:#8df5d6;"></div>
<div style="left:24px;top:197px;width:1px;height:24px;background:#1e1e1e;"></div>
<div style="left:91px;top:197px;width:1px;height:24px;background:#1e1e1e;"></div>
<div style="left:115px;top:197px;width:1px;height:24px;background:#1e1e1e;"></div>
<div style="left:140px;top:197px;width:1px;height:24px;background:#1e1e1e;"></div>
<div style="left:165px;top:197px;width:1px;height:24px;background:#1e1e1e;"></div>
<div style="left:189px;top:197px;width:1px;height:24px;background:#1e1e1e;"></div>
<div style="left:214px;top:197px;width:1px;height:24px;background:#1e1e1e;"></div>
<div style="left:239px;top:197px;width:1px;height:24px;background:#1e1e1e;"></div>
<span style="left:33px;top:205px;font-size:7.4px;line-height:9.25px;color:#e6e6e6;">BPM</span>
<span style="left:55px;top:205px;font-size:8.1px;line-height:10.12px;color:#e6e6e6;">120</span>
<svg style="left:97px;top:203px;" width="140" height="12" viewBox="0 0 140 12"><path d="M3 6h6" stroke="#eee" stroke-width="1.3"/><path d="M27 6h7M30.5 2.5v7" stroke="#eee" stroke-width="1.3"/><path d="M57 2v8" stroke="#eee" stroke-width="1.3"/><path d="M52.5 6h4M54.5 4.3l-2.3 1.7 2.3 1.7z" stroke="#eee" stroke-width="0.9" fill="#eee"/><path d="M77.5 2v8" stroke="#eee" stroke-width="1.3"/><path d="M78 6h4M80 4.3l2.3 1.7 -2.3 1.7z" stroke="#eee" stroke-width="0.9" fill="#eee"/></svg>
<span style="left:198.16px;top:205px;font-size:8.0px;line-height:10.0px;color:#e6e6e6;">/2</span>
<span style="left:221.94px;top:205px;font-size:8.0px;line-height:10.0px;color:#e6e6e6;">×2</span>
<div style="left:1220px;top:197px;width:1px;height:24px;background:#1a1a1a;"></div>
<svg style="left:1228px;top:206px;" width="6" height="6" viewBox="0 0 6 6"><circle cx="3" cy="3" r="2.7" fill="#fff"/></svg>
<span style="left:1236px;top:206px;font-size:6.8px;line-height:8.5px;color:#f0f0f0;">RECORD</span>
<div style="left:0px;top:223px;width:634px;height:16px;background:#252525;border-radius:3px 0 0 0;"></div>
<div style="left:0px;top:239px;width:634px;height:33px;background:#171717;"></div>
<div style="left:0px;top:627px;width:634px;height:33px;background:#171717;"></div>
<svg style="left:0;top:272px;" width="634" height="355" viewBox="0 272 634 355"><defs>
<radialGradient id="bg" cx="330" cy="455" r="460" gradientUnits="userSpaceOnUse">
<stop offset="0" stop-color="#fdec06"/><stop offset="0.45" stop-color="#fbe408"/><stop offset="0.7" stop-color="#f9d80a"/><stop offset="0.88" stop-color="#f7cb0a"/><stop offset="1" stop-color="#f5c00c"/>
</radialGradient>
<linearGradient id="cone" x1="285" y1="450" x2="345" y2="495" gradientUnits="userSpaceOnUse">
<stop offset="0" stop-color="#2c2c2c"/><stop offset="0.35" stop-color="#555"/><stop offset="0.7" stop-color="#7a7a7a"/><stop offset="1" stop-color="#4a4a4a"/>
</linearGradient>
<linearGradient id="rg" x1="530" y1="0" x2="634" y2="0" gradientUnits="userSpaceOnUse"><stop offset="0" stop-color="#f0a012" stop-opacity="0"/><stop offset="1" stop-color="#f0a012" stop-opacity="0.4"/></linearGradient>
<filter id="b1" x="-10%" y="-30%" width="120%" height="160%"><feGaussianBlur stdDeviation="0.9"/></filter>
<filter id="b0"><feGaussianBlur stdDeviation="0.35"/></filter>
</defs><rect x="0" y="272" width="634" height="355" fill="url(#bg)"/><rect x="530" y="272" width="104" height="355" fill="url(#rg)"/><g stroke="#fff8c8" fill="none" stroke-linecap="round" stroke-width="2" opacity="0.75"><circle cx="22.5" cy="450.6" r="11.2" opacity="0.5"/><circle cx="156.8" cy="509.4" r="8.6" opacity="1"/><path d="M538.4 375.5l10.6 7.6-4.4 11.6-12 0-4.6-11.2z"/></g><g stroke="#fff8c8" fill="none" stroke-linecap="round" stroke-width="1.4" opacity="0.45"><circle cx="89" cy="420.5" r="6.5"/><path d="M148.7 477h11.5l-6 10.1z"/><circle cx="537.7" cy="475.5" r="4"/><path d="M534 477.5l7-4"/><circle cx="563.7" cy="578.6" r="2.5"/><path d="M283 396l-3 10"/></g><g stroke="#fff8c8" fill="none" stroke-linecap="round" stroke-width="1.7" opacity="0.85"><path d="M117 496.6L129.8 500.7"/><path d="M167.3 512.5L175.5 512.5"/><path d="M220.5 556.6L236 558.8"/><path d="M152.8 614.4L159 607.4"/><path d="M116.3 612L124.3 614.4"/><path d="M244.8 616L252.8 609"/><path d="M6.3 577L7 583"/><path d="M299.3 543.2L301.4 548.4"/><path d="M388.4 469.2L395.6 478.4"/><path d="M482 460.5L492.6 451"/><path d="M544.7 440.8L556.8 443.5"/><path d="M503 400.8L511 402.2"/><path d="M421.4 553.6L431 558.8"/><path d="M572.7 275.9L582.5 272.8"/><path d="M184.3 364L187 357"/><path d="M558 440L563 437.5"/><path d="M360 607L366 604.5"/></g><g stroke="#fff8c8" fill="none" stroke-linecap="round" stroke-width="1.1" opacity="0.4"><path d="M121.5 581.4l4.2-4.2M486 526l3 4M267 556l4-4M590 545l3-3"/></g><g filter="url(#b0)"><path d="M287 394L282.6 429 276.4 503 276.6 527.8 280.5 525.7 303.9 501 329.2 481.5 354.5 464 374 448.4 385.6 436.7 397.3 421.2 405 405.6 409 394Z" fill="url(#cone)"/><path d="M287 394L282.6 429 278 484 300 440 318 394Z" fill="#262626" opacity="0.8"/><path d="M318 394l20 0-22 30-20 28z" fill="#8a8a8a" opacity="0.55"/><path d="M352 394l22 0-30 34z" fill="#3a3a3a" opacity="0.7"/><g stroke="#b9b9b9" stroke-width="0.7" fill="none" opacity="0.55"><path d="M277.4 514.9Q289.9 523.7 290.4 516.6"/><path d="M278.2 502.1Q297.2 511.5 304.2 505.0"/><path d="M279.1 489.2Q304.6 499.2 318.1 493.2"/><path d="M279.9 476.3Q311.9 486.7 331.9 481.1"/><path d="M280.7 463.5Q319.2 474.1 345.7 468.7"/><path d="M281.5 450.6Q326.5 461.3 359.5 455.9"/><path d="M282.4 437.7Q333.9 448.3 373.4 442.9"/><path d="M283.2 424.9Q341.2 435.2 387.2 429.6"/><path d="M276.8 527.5L303.0 414.4"/><path d="M276.8 527.5L322.0 416.2"/><path d="M276.8 527.5L341.0 417.5"/><path d="M276.8 527.5L360.0 418.2"/><path d="M276.8 527.5L379.0 418.4"/></g><g stroke="#3a3320" stroke-width="0.6" opacity="0.75"><path d="M366 451l3 25M372 447l8 16M378 443l12 14M384 437l9 12M390 430l10 8M358 456l-2 14M283 405l-14-4M284 412l-12 2M285 399l-10-6"/></g><g stroke="#e8e8e8" stroke-width="0.7" opacity="0.7" fill="none"><path d="M286 420l14 6-8 10zM292 436l16-6 4 14M348 446l10 10-14 6zM300 404l10-8 6 12"/></g></g><g fill="#ef1d8f" filter="url(#b0)"><polygon points="250,272 238.3,273.6 230,281.9 225.8,290.2 216.1,297.2 207.8,300 200.5,297.2 198.6,287.4 195.6,284.2 192.3,286 193.9,295.8 195.3,302.7 191.1,311 185.6,311 181.4,308.3 177.2,309.7 175.8,320.8 171.7,330.5 162,337.4 161.6,345.8 164,350 175.8,347.2 185.6,351.3 193.9,356.4 202.2,352.7 207.8,348.5 212.6,352 211.9,343 213.3,334.7 221.7,329.1 230,320.8 234.2,312.4 239.7,306.9 250,305.5" stroke="#ef1d8f" stroke-width="1.5" stroke-linejoin="round"/><polygon points="91.2,408.3 102.3,406.2 116.6,410.3 128.8,414.4 130.8,410.3 136,411.5 141,416.4 145,422.5 161.3,424.5 175.5,431.6 193.8,431.2 200.9,435.2 200.6,440.8 196.5,437.5 188,436 179.5,436 189.7,448.9 201.9,455 212,467.2 222.2,471.2 230.3,479.4 238,486 243.5,498.5 238.4,491.5 226.3,483.9 218.1,477.8 210,471.6 201.9,461.5 185.6,453.4 171.4,449.2 165.3,443 155.2,441 151.1,443.2 149.1,434.7 145,428.6 130.8,420.5 114.5,415.4 100.3,412.3 92.2,411.3" stroke="#ef1d8f" stroke-width="1.2" stroke-linejoin="round"/><polygon points="242.5,498.5 234.4,483.4 233.8,467.2 240.5,450.9 250.6,438.7 262.8,430.6 271,420.5 275.4,418.2 278.2,426 290.8,427 301,429 307.3,434.5 315.5,429 327.8,420.9 342.2,414.7 358.6,408.5 375,394 414,394 399.7,406.5 387.4,414.7 375,427 358.6,441.4 342.8,450.4 323.4,455.2 315.6,460.1 309.7,469.8 303.9,479.5 290.3,489.3 279,495.2 262.8,492 252.7,493.6" stroke="#ef1d8f" stroke-width="1.5" stroke-linejoin="round"/><path d="M404 401q10-5 22-2q12-1 19 3q2 5-6 8q-12 3-22 0q-10 2-14-2z"/><path d="M399 416q14-4 26 0q12-3 21 2q1 7-9 9q-10 3-20 0q-12 3-19-3z"/><path d="M394 431q12-3 22 1q10-2 17 3q0 6-8 9q-9 3-16-1q-10 1-15-5z"/><ellipse cx="246.6" cy="430.6" rx="2.6" ry="6" transform="rotate(25 246.6 430.6)"/><ellipse cx="210" cy="442.8" rx="1.8" ry="5.2" transform="rotate(-35 210 442.8)"/><ellipse cx="221.2" cy="453" rx="1.5" ry="3.4" transform="rotate(-40 221.2 453)"/><ellipse cx="125.5" cy="369" rx="2" ry="4.6" transform="rotate(-30 125.5 369)"/></g><g fill="#ff55b4" opacity="0.28" filter="url(#b1)"><path d="M196 318l14-8 10 6-8 12-14 4z"/><path d="M181 322l8-6 2 14-8 8z"/><path d="M262 440l20-4 10 10-12 16-18 4z"/></g><g fill="#fbe408"><ellipse cx="216.8" cy="316.6" rx="2.2" ry="4.4" transform="rotate(25 216.8 316.6)"/><ellipse cx="227.5" cy="315.5" rx="1.8" ry="6" transform="rotate(50 227.5 315.5)"/><ellipse cx="188" cy="323.5" rx="1.1" ry="6"/><ellipse cx="196.7" cy="335" rx="2.4" ry="1.8"/><ellipse cx="248.6" cy="456" rx="8" ry="3.6" transform="rotate(8 248.6 456)"/><ellipse cx="253.5" cy="472.3" rx="3.4" ry="5.6" transform="rotate(-15 253.5 472.3)"/><ellipse cx="240" cy="486.5" rx="5" ry="1.6" transform="rotate(10 240 486.5)"/><path d="M406 412h30v2.2h-30zM400 428h34v2h-34zM412 405l16 0 0 1.6-16 0z"/><path d="M239.7 282.6L250 274 250 283 241 284.6zM241 288.6h9v2.8h-9zM240.4 297.6h9.6v3.2h-9.6z"/></g><g fill="#5c5c66"><ellipse cx="337" cy="426" rx="14.5" ry="5.2" transform="rotate(-24 337 426)"/><ellipse cx="361" cy="431" rx="5" ry="3.2" transform="rotate(-30 361 431)"/><ellipse cx="376" cy="416" rx="6" ry="3.4" transform="rotate(-38 376 416)"/></g><path d="M326 430l10-5 8 1-12 7z" fill="#3a3a8a" opacity="0.7"/><g fill="#c65430"><circle cx="158.5" cy="322.2" r="1.5"/><circle cx="221.7" cy="336" r="1.5"/><circle cx="234.2" cy="333.3" r="1.5"/><circle cx="160.8" cy="357.6" r="1.5"/><circle cx="167.8" cy="356.2" r="1.5"/><circle cx="216.8" cy="360.4" r="1.5"/><circle cx="111" cy="348" r="1.5"/><circle cx="150" cy="381" r="1.5"/><circle cx="203" cy="395" r="1.5"/><circle cx="204.3" cy="395" r="1.5"/><circle cx="246" cy="413" r="1.5"/><circle cx="246.5" cy="417" r="1.5"/><circle cx="193" cy="428" r="1.5"/><circle cx="178" cy="456.5" r="1.5"/><circle cx="196" cy="468.5" r="0.9"/><circle cx="199" cy="470.5" r="0.9"/><circle cx="208" cy="481" r="0.9"/><circle cx="216" cy="493" r="0.9"/><circle cx="222" cy="491" r="0.9"/><circle cx="231" cy="497" r="0.9"/><circle cx="253" cy="499" r="0.9"/><circle cx="254" cy="503" r="0.9"/><circle cx="95" cy="418.5" r="0.9"/><circle cx="126" cy="405.5" r="0.9"/><circle cx="449" cy="400" r="0.9"/><circle cx="455" cy="407" r="0.9"/><circle cx="459" cy="414" r="0.9"/><circle cx="452" cy="422" r="0.9"/><circle cx="444" cy="436" r="0.9"/><circle cx="436" cy="449" r="0.9"/><circle cx="428" cy="452" r="0.9"/><circle cx="420" cy="452.5" r="0.9"/><circle cx="412" cy="450" r="0.9"/><circle cx="404" cy="448" r="0.9"/><circle cx="400" cy="460" r="0.9"/><circle cx="396" cy="464" r="0.9"/><circle cx="452" cy="405" r="0.9"/><circle cx="441" cy="397" r="0.9"/><circle cx="466" cy="416" r="0.9"/></g><g filter="url(#b0)"><polygon points="174.4,281.2 180.7,287.4 174.4,300.6 168.6,299.3" fill="#2323e0"/><rect x="141.3" y="394.5" width="17" height="5.7" fill="#2323e0"/><rect x="141.3" y="394.5" width="17" height="1.6" fill="#1515a8"/><polygon points="106,424.5 144,424.5 144.6,429.6 127.7,444.4 106.4,431.6" fill="#1515a8"/><polygon points="106,424.5 144,424.5 127.5,436.5" fill="#3d3dff"/><polygon points="177.1,492 191.7,492 184.6,506.8" fill="#2323e0"/><polygon points="177.1,492 191.7,492 190.6,494.4 178.2,494.4" fill="#1515a8"/><rect x="81" y="512.9" width="8.2" height="24" fill="#2323e0"/><rect x="81" y="512.9" width="8.2" height="2" fill="#1515a8"/><polygon points="500.5,449.4 513.4,435.5 518.6,448.8" fill="#2323e0"/><polygon points="405.9,475.3 413,470.2 419.2,482.5" fill="#2323e0"/><polygon points="332.8,532.8 343.3,529.3 342.2,543.2" fill="#2323e0"/><polygon points="450.9,612 457.8,596 468.3,613.3" fill="#2323e0"/></g><rect x="477.5" y="582" width="34" height="10" rx="2" fill="#2323e0" filter="url(#b1)"/></svg>
<div style="left:0px;top:272px;width:1px;height:355px;background:#d9a83a;"></div>
<div style="left:0px;top:660px;width:634px;height:16px;background:#2a2a2a;"></div>
<span style="left:6px;top:664px;font-size:8.0px;line-height:10.0px;color:#d6d6d6;">Composition - 1920x1080</span>
<svg style="left:621.5px;top:663.5px;" width="9" height="9" viewBox="0 0 9 9"><circle cx="4.5" cy="4.5" r="2.6" fill="none" stroke="#ddd" stroke-width="1.6" stroke-dasharray="1.3 0.75"/><circle cx="4.5" cy="4.5" r="1.9" fill="none" stroke="#ddd" stroke-width="1"/></svg>
<div style="left:636px;top:223px;width:449px;height:16px;background:#2b2b2b;border-radius:3px 3px 0 0;"></div>
<span style="left:851.98px;top:227px;font-size:8.15px;line-height:10.19px;color:#ddd;">Clip</span>
<div style="left:636px;top:239px;width:449px;height:24px;background:#f2c200;background:linear-gradient(90deg,#f5cc08 0%,#f8e008 9%,#faf008 33%,#faef08 66%,#f8de0a 90%,#f6d00a 100%);"></div>
<div style="left:636px;top:239px;width:449px;height:24px;background:transparent;background:linear-gradient(180deg,rgba(240,180,0,0.06),rgba(255,240,0,0) 30%,rgba(255,240,0,0) 70%,rgba(240,180,0,0.06));"></div>
<div style="left:641.5px;top:245.5px;width:81.5px;height:11.5px;background:#574600;"></div>
<span style="left:644.6px;top:247px;font-size:7.55px;line-height:9.44px;color:#f4ecc0;">KaktusGlace_BG</span>
<svg style="left:1065px;top:246.5px;" width="9" height="9" viewBox="0 0 9 9"><circle cx="4.5" cy="4.5" r="2.6" fill="none" stroke="#ecd040" stroke-width="1.6" stroke-dasharray="1.3 0.75" opacity="0.6"/><circle cx="4.5" cy="4.5" r="1.9" fill="none" opacity="0.6" stroke="#ecd040" stroke-width="1"/></svg>
<div style="left:636px;top:263px;width:449px;height:33px;background:#1c1c1c;"></div>
<div style="left:636px;top:264px;width:449px;height:14px;background:#2b2b2b;"></div>
<svg style="left:641.7px;top:267.5px;" width="6" height="7" viewBox="0 0 6 7"><path d="M0.5 0.4l4.4 3.1-4.4 3.100z" fill="#8c8c8c"/></svg>
<span style="left:650px;top:267px;font-size:8.2px;line-height:10.25px;color:#e6e6e6;">Dashboard</span>
<div style="left:636px;top:279.5px;width:449px;height:15px;background:#2b2b2b;"></div>
<svg style="left:641px;top:284.5px;" width="6" height="5" viewBox="0 0 6 5"><path d="M0.4 0.6h5.2l-2.6 3.8z" fill="#888"/></svg>
<span style="left:650px;top:283px;font-size:8.2px;line-height:10.25px;color:#e6e6e6;">Transport</span>
<span style="left:1035px;top:283px;font-size:8.2px;line-height:10.25px;color:#e6e6e6;">Timeline</span>
<svg style="left:1072.5px;top:284.5px;" width="6" height="5" viewBox="0 0 6 5"><path d="M0.4 0.6h5.2l-2.6 3.8z" fill="#eee"/></svg>
<div style="left:636px;top:295px;width:449px;height:96px;background:#1b1b1b;"></div>
<span style="left:1060.6px;top:298px;font-size:6.8px;line-height:8.5px;color:#8f8f8f;">00.17</span>
<div style="left:643px;top:322px;width:435px;height:6px;background:#2e2e2e;"></div>
<svg style="left:642px;top:322px;" width="7" height="6" viewBox="0 0 7 6"><path d="M0.5 6h4.5v-5.5z" fill="#4a957f"/></svg>
<svg style="left:1072px;top:322px;" width="7" height="6" viewBox="0 0 7 6"><path d="M1.5 6h4.8l-4.8 -5.5z" fill="#4a957f"/></svg>
<svg style="left:671.5px;top:306px;" width="9" height="16" viewBox="0 0 9 16"><path d="M0.3 0.8q0-0.5 0.5-0.5h7.4q0.5 0 0.5 0.5v10.4l-4.2 4-4.2-4z" fill="#4a957f"/></svg>
<div style="left:684.5px;top:336px;width:19px;height:15.5px;background:#7df2cf;border-radius:1px;"></div>
<svg style="left:650px;top:338px;" width="60" height="12" viewBox="0 0 60 12"><path d="M4.2 6l4.8-3.6v7.2z" fill="#eee"/><path d="M22.4 2.4h1.9v7.2h-1.9z M26 2.4h1.9v7.2h-1.9z" fill="#eee"/><path d="M46.2 6l-4.6-3.4v6.8z" fill="#0b0b0b"/></svg>
<svg style="left:1025px;top:338px;" width="56" height="12" viewBox="0 0 56 12"><ellipse cx="6.600" cy="6.400" rx="2.900" ry="2.200" fill="none" stroke="#eee" stroke-width="1.150"/><path d="M2.900 3.500l2.900 -0.300 -0.900 2.500z M10.300 9.300l-2.900 0.300 0.900 -2.500z" fill="#eee"/><path d="M14.8 4.8h4l-2 2.4z" fill="#eee"/><path d="M31.200 3.900l3.400 2.500 -3.400 2.500z" fill="#eee"/><path d="M33.600 6.400h5" stroke="#eee" stroke-width="1.200"/><path d="M43 4.8h4l-2 2.4z" fill="#eee"/></svg>
<span style="left:666.18px;top:362px;font-size:8.1px;line-height:10.12px;color:#e6e6e6;">Speed</span>
<span style="left:697.5px;top:362px;font-size:8.1px;line-height:10.12px;color:#e6e6e6;">1</span>
<div style="left:731px;top:361.1px;width:349px;height:11.4px;background:#080808;"></div>
<div style="left:731px;top:361.1px;width:87px;height:11.4px;background:#2d2d2d;"></div>
<div style="left:818px;top:360.8px;width:3px;height:12px;background:#4a957f;"></div>
<span style="left:658.99px;top:378px;font-size:8.1px;line-height:10.12px;color:#e6e6e6;">Duration</span>
<span style="left:697.5px;top:378px;font-size:8.1px;line-height:10.12px;color:#e6e6e6;">10 s</span>
<span style="left:737.37px;top:378px;font-size:8.0px;line-height:10.0px;color:#e6e6e6;font-weight:bold;">-</span>
<span style="left:750.92px;top:378px;font-size:8.5px;line-height:10.62px;color:#e6e6e6;font-weight:bold;">+</span>
<span style="left:766.66px;top:378px;font-size:8.0px;line-height:10.0px;color:#e6e6e6;">/2</span>
<span style="left:781.22px;top:378px;font-size:8.0px;line-height:10.0px;color:#e6e6e6;">*2</span>
<div style="left:636px;top:390.5px;width:449px;height:33px;background:#1c1c1c;"></div>
<div style="left:636px;top:391.3px;width:449px;height:14.7px;background:#2b2b2b;"></div>
<svg style="left:641.7px;top:395.0px;" width="6" height="7" viewBox="0 0 6 7"><path d="M0.5 0.4l4.4 3.1-4.4 3.100z" fill="#8c8c8c"/></svg>
<span style="left:650px;top:395px;font-size:8.2px;line-height:10.25px;color:#e6e6e6;">Cuepoints</span>
<div style="left:636px;top:407.2px;width:449px;height:15px;background:#2b2b2b;"></div>
<svg style="left:641.7px;top:411.0px;" width="6" height="7" viewBox="0 0 6 7"><path d="M0.5 0.4l4.4 3.1-4.4 3.100z" fill="#8c8c8c"/></svg>
<span style="left:650px;top:411px;font-size:8.2px;line-height:10.25px;color:#e6e6e6;">Autopilot</span>
<div style="left:636px;top:423px;width:449px;height:32px;background:#2c5a4b;"></div>
<div style="left:693.5px;top:423px;width:1px;height:32px;background:#264e41;"></div>
<svg style="left:641px;top:428.5px;" width="6" height="5" viewBox="0 0 6 5"><path d="M0.4 0.6h5.2l-2.6 3.8z" fill="#4f8a78"/></svg>
<div style="left:657.5px;top:426.3px;width:32.5px;height:25.2px;background:#2c5a4b;border:1px solid #3f7a66;"></div>
<div style="left:658.5px;top:430.3px;width:30.5px;height:17.5px;background:#f5d000;background:radial-gradient(ellipse at 50% 50%,#fff200 0%,#fadc00 60%,#efb800 100%);"></div>
<span style="left:699.7px;top:426px;font-size:6.75px;line-height:8.44px;color:#7aa898;">KaktusGlace_BG.mov</span>
<span style="left:699.7px;top:435px;font-size:6.9px;line-height:8.62px;color:#7aa898;">DXV 3.0 Normal Quality, No Alpha, 1920x1080, 25.00 Fps, 00:00:10</span>
<svg style="left:1055.5px;top:427.5px;" width="9" height="9" viewBox="0 0 9 9"><path d="M1.2 7.8l6.6-6.6" stroke="#eee" stroke-width="1.2"/><path d="M4.6 0.8h3.6v3.6z M0.8 4.6v3.6h3.6z" fill="#eee"/></svg>
<svg style="left:1072.5px;top:428px;" width="8" height="8" viewBox="0 0 8 8"><path d="M1 1l6 6M7 1l-6 6" stroke="#eee" stroke-width="1.4"/></svg>
<div style="left:1039px;top:441px;width:32.5px;height:10.5px;background:#7df2cf;border-radius:2px;"></div>
<span style="left:1043.48px;top:443px;font-size:5.6px;line-height:7.0px;color:#1d6a57;font-weight:bold;-webkit-text-stroke:0;">R</span>
<span style="left:1053.32px;top:443px;font-size:5.6px;line-height:7.0px;color:#1d6a57;font-weight:bold;-webkit-text-stroke:0;">G</span>
<span style="left:1063.98px;top:443px;font-size:5.6px;line-height:7.0px;color:#1d6a57;font-weight:bold;-webkit-text-stroke:0;">B</span>
<div style="left:1072px;top:441px;width:8px;height:10.5px;background:#4f3b42;border-radius:1px;"></div>
<span style="left:1073.98px;top:443px;font-size:5.6px;line-height:7.0px;color:#b07088;font-weight:bold;">A</span>
<div style="left:636px;top:455px;width:449px;height:160px;background:#0f0f0f;"></div>
<div style="left:636px;top:455.5px;width:449px;height:15px;background:#161616;"></div>
<div style="left:693.5px;top:455.5px;width:1px;height:15px;background:#101010;"></div>
<span style="left:662.14px;top:459px;font-size:8.1px;line-height:10.12px;color:#e6e6e6;">Opacity</span>
<span style="left:697.5px;top:459px;font-size:8.1px;line-height:10.12px;color:#e6e6e6;">100 %</span>
<div style="left:731px;top:457.3px;width:349px;height:11.4px;background:#080808;"></div>
<div style="left:731px;top:457.3px;width:346px;height:11.4px;background:#2d2d2d;"></div>
<div style="left:1077px;top:457px;width:3px;height:12px;background:#7d9a90;"></div>
<div style="left:636px;top:471.5px;width:449px;height:15px;background:#161616;"></div>
<div style="left:693.5px;top:471.5px;width:1px;height:15px;background:#101010;"></div>
<span style="left:668.9px;top:475px;font-size:8.1px;line-height:10.12px;color:#e6e6e6;">Width</span>
<span style="left:697.5px;top:475px;font-size:8.1px;line-height:10.12px;color:#e6e6e6;">1920</span>
<span style="left:737.37px;top:475px;font-size:8.0px;line-height:10.0px;color:#e6e6e6;font-weight:bold;">-</span>
<span style="left:750.92px;top:474px;font-size:8.5px;line-height:10.62px;color:#e6e6e6;font-weight:bold;">+</span>
<div style="left:636px;top:487.5px;width:449px;height:15px;background:#161616;"></div>
<div style="left:693.5px;top:487.5px;width:1px;height:15px;background:#101010;"></div>
<span style="left:666.19px;top:491px;font-size:8.1px;line-height:10.12px;color:#e6e6e6;">Height</span>
<span style="left:697.5px;top:491px;font-size:8.1px;line-height:10.12px;color:#e6e6e6;">1080</span>
<span style="left:737.37px;top:491px;font-size:8.0px;line-height:10.0px;color:#e6e6e6;font-weight:bold;">-</span>
<span style="left:750.92px;top:490px;font-size:8.5px;line-height:10.62px;color:#e6e6e6;font-weight:bold;">+</span>
<div style="left:636px;top:503.5px;width:449px;height:15px;background:#161616;"></div>
<div style="left:693.5px;top:503.5px;width:1px;height:15px;background:#101010;"></div>
<span style="left:649.58px;top:507px;font-size:7.5px;line-height:9.38px;color:#e6e6e6;">Blend Mode</span>
<span style="left:697.5px;top:507px;font-size:8.1px;line-height:10.12px;color:#e6e6e6;">Layer Determined</span>
<svg style="left:768px;top:508.8px;" width="6" height="5" viewBox="0 0 6 5"><path d="M0.3 0.6h5.4l-2.7 3.8z" fill="#eee"/></svg>
<div style="left:636px;top:519.3px;width:449px;height:15.7px;background:#2c5a4b;"></div>
<svg style="left:641px;top:524.7px;" width="6" height="5" viewBox="0 0 6 5"><path d="M0.4 0.6h5.2l-2.6 3.8z" fill="#4f8a78"/></svg>
<span style="left:650px;top:523px;font-size:8.2px;line-height:10.25px;color:#cfeee3;">Transform</span>
<div style="left:1068.5px;top:519.3px;width:1px;height:15.7px;background:#244a3e;"></div>
<span style="left:1073.74px;top:523px;font-size:8.0px;line-height:10.0px;color:#e8f5f0;font-weight:bold;">P.</span>
<div style="left:636px;top:535.5px;width:449px;height:15px;background:#161616;"></div>
<div style="left:693.5px;top:535.5px;width:1px;height:15px;background:#101010;"></div>
<span style="left:653.13px;top:539px;font-size:8.1px;line-height:10.12px;color:#e6e6e6;">Position X</span>
<span style="left:697.5px;top:539px;font-size:8.1px;line-height:10.12px;color:#e6e6e6;">0</span>
<span style="left:737.37px;top:539px;font-size:8.0px;line-height:10.0px;color:#e6e6e6;font-weight:bold;">-</span>
<span style="left:750.92px;top:538px;font-size:8.5px;line-height:10.62px;color:#e6e6e6;font-weight:bold;">+</span>
<div style="left:636px;top:551.5px;width:449px;height:15px;background:#161616;"></div>
<div style="left:693.5px;top:551.5px;width:1px;height:15px;background:#101010;"></div>
<span style="left:653.28px;top:555px;font-size:8.1px;line-height:10.12px;color:#e6e6e6;">Position Y</span>
<span style="left:697.5px;top:555px;font-size:8.1px;line-height:10.12px;color:#e6e6e6;">0</span>
<span style="left:737.37px;top:555px;font-size:8.0px;line-height:10.0px;color:#e6e6e6;font-weight:bold;">-</span>
<span style="left:750.92px;top:554px;font-size:8.5px;line-height:10.62px;color:#e6e6e6;font-weight:bold;">+</span>
<div style="left:636px;top:567.5px;width:449px;height:15px;background:#161616;"></div>
<div style="left:693.5px;top:567.5px;width:1px;height:15px;background:#101010;"></div>
<svg style="left:641.7px;top:571.5px;" width="6" height="7" viewBox="0 0 6 7"><path d="M0.5 0.4l4.4 3.1-4.4 3.100z" fill="#8c8c8c"/></svg>
<span style="left:650px;top:571px;font-size:8.1px;line-height:10.12px;color:#e6e6e6;">Scale</span>
<span style="left:697.5px;top:571px;font-size:8.1px;line-height:10.12px;color:#e6e6e6;">100 %</span>
<div style="left:731px;top:569.3px;width:349px;height:11.4px;background:#080808;"></div>
<div style="left:731px;top:569.3px;width:34px;height:11.4px;background:#2d2d2d;"></div>
<div style="left:765px;top:569px;width:3px;height:12px;background:#4a957f;"></div>
<div style="left:636px;top:583.5px;width:449px;height:15px;background:#161616;"></div>
<div style="left:693.5px;top:583.5px;width:1px;height:15px;background:#101010;"></div>
<svg style="left:641.7px;top:587.5px;" width="6" height="7" viewBox="0 0 6 7"><path d="M0.5 0.4l4.4 3.1-4.4 3.100z" fill="#8c8c8c"/></svg>
<span style="left:650px;top:587px;font-size:8.1px;line-height:10.12px;color:#e6e6e6;">Rotation</span>
<span style="left:697.5px;top:587px;font-size:8.1px;line-height:10.12px;color:#e6e6e6;">0 °</span>
<div style="left:731px;top:585.3px;width:349px;height:11.4px;background:#080808;"></div>
<div style="left:904px;top:585px;width:3px;height:12px;background:#5f8a7c;"></div>
<div style="left:636px;top:599.5px;width:449px;height:15px;background:#161616;"></div>
<div style="left:693.5px;top:599.5px;width:1px;height:15px;background:#101010;"></div>
<svg style="left:641.7px;top:603.5px;" width="6" height="7" viewBox="0 0 6 7"><path d="M0.5 0.4l4.4 3.1-4.4 3.100z" fill="#8c8c8c"/></svg>
<span style="left:650px;top:603px;font-size:8.1px;line-height:10.12px;color:#e6e6e6;">Anchor</span>
<span style="left:697.5px;top:603px;font-size:8.1px;line-height:10.12px;color:#e6e6e6;">0</span>
<div style="left:731px;top:601.3px;width:349px;height:11.4px;background:#080808;"></div>
<div style="left:904px;top:601px;width:3px;height:12px;background:#5f8a7c;"></div>
<div style="left:636px;top:615px;width:449px;height:62px;background:#0c0c0c;"></div>
<span style="left:776.7px;top:641px;font-size:7.95px;line-height:9.94px;color:#2c2c2c;">Drop audio, video, mask, source or effect here.</span>
<div style="left:1087px;top:223px;width:193px;height:16px;background:#131313;"></div>
<div style="left:1087px;top:223px;width:64px;height:16px;background:#2b2b2b;border-radius:3px 3px 0 0;"></div>
<div style="left:1215px;top:223px;width:1px;height:16px;background:#1d1d1d;"></div>
<span style="left:1107.36px;top:227px;font-size:8.2px;line-height:10.25px;color:#ddd;">Slices</span>
<span style="left:1170.54px;top:227px;font-size:8.2px;line-height:10.25px;color:#ddd;">Effects</span>
<span style="left:1232.46px;top:227px;font-size:8.2px;line-height:10.25px;color:#ddd;">Sources</span>
<div style="left:1087px;top:238px;width:193px;height:25px;background:#2b2b2b;"></div>
<div style="left:1096px;top:244px;width:175px;height:14px;background:#000;border-radius:3px;"></div>
<svg style="left:1101px;top:245px;" width="12" height="12" viewBox="0 0 12 12"><circle cx="5" cy="4.8" r="3" fill="none" stroke="#aee9d7" stroke-width="1.3"/><path d="M7.2 7.2l2.6 2.8" stroke="#aee9d7" stroke-width="1.5"/></svg>
<svg style="left:1261px;top:247.5px;" width="7" height="7" viewBox="0 0 7 7"><path d="M1 1l5 5M6 1l-5 5" stroke="#eee" stroke-width="1.2"/></svg>
<div style="left:1087px;top:263px;width:193px;height:346px;background:#0e0e0e;"></div>
<svg style="left:1088.5px;top:268.5px;" width="6" height="6" viewBox="0 0 6 6"><path d="M0.4 1h5.2l-2.6 4z" fill="#888"/></svg>
<span style="left:1096.5px;top:266px;font-size:7.6px;line-height:9.5px;color:#e6e6e6;">Screen 1</span>
<span style="left:1110px;top:280px;font-size:7.5px;line-height:9.38px;color:#e6e6e6;">Slice 1</span>
<span style="left:1110px;top:293px;font-size:7.5px;line-height:9.38px;color:#e6e6e6;">Slice 2</span>
<span style="left:1110px;top:306px;font-size:7.5px;line-height:9.38px;color:#e6e6e6;">Slice 3</span>
<span style="left:1110px;top:319px;font-size:7.5px;line-height:9.38px;color:#e6e6e6;">Slice 4</span>
<div style="left:1087px;top:609px;width:193px;height:14px;background:#2a2a2a;"></div>
<span style="left:1091.5px;top:612px;font-size:7.8px;line-height:9.75px;color:#e6e6e6;">Help</span>
<svg style="left:1270px;top:612.5px;" width="7" height="7" viewBox="0 0 7 7"><path d="M1 1l5 5M6 1l-5 5" stroke="#eee" stroke-width="1.2"/></svg>
<div style="left:1087px;top:623px;width:193px;height:54px;background:#0d0d0d;"></div>
<span style="left:1091.5px;top:626px;font-size:7.5px;line-height:9.38px;color:#d8d8d8;">Move your mouse over the interface element</span>
<span style="left:1091.5px;top:636px;font-size:7.6px;line-height:9.5px;color:#d8d8d8;">that you would like more info about.</span>
<div style="left:0px;top:677px;width:1280px;height:15px;background:#2a2a2a;"></div>
<span style="left:6px;top:682px;font-size:7.05px;line-height:8.81px;color:#cfcfcf;">Resolume Arena 7.10.0</span>
<span style="left:1256.6px;top:682px;font-size:6.95px;line-height:8.69px;color:#cfcfcf;">12:38</span>
<div style="left:0px;top:692px;width:1280px;height:28px;background:#000;"></div>
<div style="left:247.5px;top:92px;width:276px;height:302.5px;background:#2e2e2e;border-radius:2px;box-shadow:0 1px 3px rgba(0,0,0,0.5);"></div>
<div style="left:251px;top:301.7333333333333px;width:90px;height:14.8px;background:#434343;border-radius:1px;"></div>
<svg style="left:329px;top:305.7333333333333px;" width="8" height="8" viewBox="0 0 8 8"><path d="M4 7.2 C1.5 5.2 0.4 4 0.4 2.5 C0.4 1.2 1.3 0.5 2.3 0.5 C3 0.5 3.6 0.9 4 1.6 C4.4 0.9 5 0.5 5.7 0.5 C6.7 0.5 7.6 1.2 7.6 2.5 C7.6 4 6.5 5.2 4 7.2z" fill="#6a6a6a"/></svg>
<svg style="left:256px;top:101.0px;" width="6" height="6" viewBox="0 0 6 6"><path d="M0.3 1h5.4l-2.7 4.2z" fill="#4e8f7c"/></svg>
<span style="left:265px;top:99px;font-size:7.3px;line-height:9.12px;color:#4e8f7c;font-weight:bold;letter-spacing:0.1px;-webkit-text-stroke:0;">FAVORITES</span>
<svg style="left:308.3px;top:100.9px;" width="8" height="8" viewBox="0 0 8 8"><path d="M4 7.2 C1.5 5.2 0.4 4 0.4 2.5 C0.4 1.2 1.3 0.5 2.3 0.5 C3 0.5 3.6 0.9 4 1.6 C4.4 0.9 5 0.5 5.7 0.5 C6.7 0.5 7.6 1.2 7.6 2.5 C7.6 4 6.5 5.2 4 7.2z" fill="#4e8f7c"/></svg>
<span style="left:265px;top:114px;font-size:8.0px;line-height:10.0px;color:#e6e6e6;">Meta Mix</span>
<span style="left:265px;top:129px;font-size:8.0px;line-height:10.0px;color:#e6e6e6;">Noisy</span>
<span style="left:265px;top:144px;font-size:8.0px;line-height:10.0px;color:#e6e6e6;">RGB</span>
<span style="left:265px;top:158px;font-size:8.0px;line-height:10.0px;color:#e6e6e6;">Shift RGB</span>
<span style="left:265px;top:173px;font-size:8.0px;line-height:10.0px;color:#e6e6e6;">Twitch</span>
<svg style="left:256px;top:189.0px;" width="6" height="6" viewBox="0 0 6 6"><path d="M0.3 1h5.4l-2.7 4.2z" fill="#4e8f7c"/></svg>
<span style="left:265px;top:187px;font-size:7.3px;line-height:9.12px;color:#4e8f7c;font-weight:bold;letter-spacing:0.1px;-webkit-text-stroke:0;">WIRE MIXERS</span>
<span style="left:265px;top:202px;font-size:8.0px;line-height:10.0px;color:#e6e6e6;">DigiGlitch3</span>
<svg style="left:265px;top:217.83333333333331px;" width="7" height="7" viewBox="0 0 7 7"><path d="M3.5 0.6v5.8M0.6 3.5h5.8" stroke="#eee" stroke-width="1.3"/></svg>
<span style="left:276px;top:217px;font-size:8.0px;line-height:10.0px;color:#e6e6e6;">Create Mixer</span>
<svg style="left:256px;top:233.0px;" width="6" height="6" viewBox="0 0 6 6"><path d="M0.3 1h5.4l-2.7 4.2z" fill="#4e8f7c"/></svg>
<span style="left:265px;top:231px;font-size:7.3px;line-height:9.12px;color:#4e8f7c;font-weight:bold;letter-spacing:0.1px;-webkit-text-stroke:0;">BLEND MODES</span>
<span style="left:265px;top:246px;font-size:8.0px;line-height:10.0px;color:#e6e6e6;">Add</span>
<span style="left:265px;top:261px;font-size:8.0px;line-height:10.0px;color:#e6e6e6;">Alpha</span>
<span style="left:265px;top:276px;font-size:8.0px;line-height:10.0px;color:#e6e6e6;">B&amp;W</span>
<span style="left:265px;top:290px;font-size:8.0px;line-height:10.0px;color:#e6e6e6;">Burn</span>
<span style="left:265px;top:305px;font-size:8.0px;line-height:10.0px;color:#e6e6e6;">Cube</span>
<span style="left:265px;top:320px;font-size:8.0px;line-height:10.0px;color:#e6e6e6;">Cut</span>
<span style="left:265px;top:334px;font-size:8.0px;line-height:10.0px;color:#e6e6e6;">Darken</span>
<span style="left:265px;top:349px;font-size:8.0px;line-height:10.0px;color:#e6e6e6;">Difference</span>
<span style="left:265px;top:364px;font-size:8.0px;line-height:10.0px;color:#e6e6e6;">Difference I</span>
<span style="left:265px;top:378px;font-size:8.0px;line-height:10.0px;color:#e6e6e6;">Displace</span>
<span style="left:355px;top:100px;font-size:8.0px;line-height:10.0px;color:#e6e6e6;">Dissolve</span>
<span style="left:355px;top:114px;font-size:8.0px;line-height:10.0px;color:#e6e6e6;">Dodge</span>
<span style="left:355px;top:129px;font-size:8.0px;line-height:10.0px;color:#e6e6e6;">Exclusion</span>
<span style="left:355px;top:144px;font-size:8.0px;line-height:10.0px;color:#e6e6e6;">Hard Light</span>
<span style="left:355px;top:158px;font-size:8.0px;line-height:10.0px;color:#e6e6e6;">JitterBug</span>
<span style="left:355px;top:173px;font-size:8.0px;line-height:10.0px;color:#e6e6e6;">Lighten</span>
<span style="left:355px;top:188px;font-size:8.0px;line-height:10.0px;color:#e6e6e6;">LoRez</span>
<span style="left:355px;top:202px;font-size:8.0px;line-height:10.0px;color:#e6e6e6;">Luma Is Alpha</span>
<span style="left:355px;top:217px;font-size:8.0px;line-height:10.0px;color:#e6e6e6;">Luma Key</span>
<span style="left:355px;top:232px;font-size:8.0px;line-height:10.0px;color:#e6e6e6;">Luma Key I</span>
<span style="left:355px;top:246px;font-size:8.0px;line-height:10.0px;color:#e6e6e6;">Meta Mix</span>
<span style="left:355px;top:261px;font-size:8.0px;line-height:10.0px;color:#e6e6e6;">Multi Task</span>
<span style="left:355px;top:276px;font-size:8.0px;line-height:10.0px;color:#e6e6e6;">Multiply</span>
<span style="left:355px;top:290px;font-size:8.0px;line-height:10.0px;color:#e6e6e6;">Noisy</span>
<span style="left:355px;top:305px;font-size:8.0px;line-height:10.0px;color:#e6e6e6;">Overlay</span>
<span style="left:355px;top:320px;font-size:8.0px;line-height:10.0px;color:#e6e6e6;">Parts</span>
<span style="left:355px;top:334px;font-size:8.0px;line-height:10.0px;color:#e6e6e6;">Push Down</span>
<span style="left:355px;top:349px;font-size:8.0px;line-height:10.0px;color:#e6e6e6;">Push Left</span>
<span style="left:355px;top:364px;font-size:8.0px;line-height:10.0px;color:#e6e6e6;">Push Right</span>
<span style="left:355px;top:378px;font-size:8.0px;line-height:10.0px;color:#e6e6e6;">Push Up</span>
<span style="left:445px;top:100px;font-size:8.0px;line-height:10.0px;color:#e6e6e6;">RGB</span>
<span style="left:445px;top:114px;font-size:8.0px;line-height:10.0px;color:#e6e6e6;">Rotate X</span>
<span style="left:445px;top:129px;font-size:8.0px;line-height:10.0px;color:#e6e6e6;">Rotate Y</span>
<span style="left:445px;top:144px;font-size:8.0px;line-height:10.0px;color:#e6e6e6;">Screen</span>
<span style="left:445px;top:158px;font-size:8.0px;line-height:10.0px;color:#e6e6e6;">Shift RGB</span>
<span style="left:445px;top:173px;font-size:8.0px;line-height:10.0px;color:#e6e6e6;">Side by Side</span>
<span style="left:445px;top:188px;font-size:8.0px;line-height:10.0px;color:#e6e6e6;">Soft Light</span>
<span style="left:445px;top:202px;font-size:8.0px;line-height:10.0px;color:#e6e6e6;">Static</span>
<span style="left:445px;top:217px;font-size:8.0px;line-height:10.0px;color:#e6e6e6;">Subtract</span>
<span style="left:445px;top:232px;font-size:8.0px;line-height:10.0px;color:#e6e6e6;">Tile</span>
<span style="left:445px;top:246px;font-size:8.0px;line-height:10.0px;color:#e6e6e6;">TimeSwitcher</span>
<span style="left:445px;top:261px;font-size:8.0px;line-height:10.0px;color:#e6e6e6;">Twitch</span>
<span style="left:445px;top:276px;font-size:8.0px;line-height:10.0px;color:#e6e6e6;">Wipe Ellipse</span>
<span style="left:445px;top:290px;font-size:8.0px;line-height:10.0px;color:#e6e6e6;">Zoom In</span>
<span style="left:445px;top:305px;font-size:8.0px;line-height:10.0px;color:#e6e6e6;">Zoom Out</span>
<span style="left:445px;top:320px;font-size:8.0px;line-height:10.0px;color:#e6e6e6;">to Black</span>
<span style="left:445px;top:334px;font-size:8.0px;line-height:10.0px;color:#e6e6e6;">to Color</span>
<span style="left:445px;top:349px;font-size:8.0px;line-height:10.0px;color:#e6e6e6;">to White</span>
<div style="left:256px;top:115.66666666666667px;width:6px;height:6px;background:#7be8c6;border-radius:3px;"></div>
<div style="left:346px;top:247.66666666666666px;width:6px;height:6px;background:#6fdcb8;border-radius:3px;"></div>
<svg style="left:299px;top:314px;" width="10" height="15" viewBox="0 0 10 15"><path d="M1 0.8v11.2l2.6-2.4 1.8 4.2 1.8-0.8-1.8-4.1h3.5z" fill="#fff" stroke="#111" stroke-width="0.8"/></svg>
</div></body></html>
